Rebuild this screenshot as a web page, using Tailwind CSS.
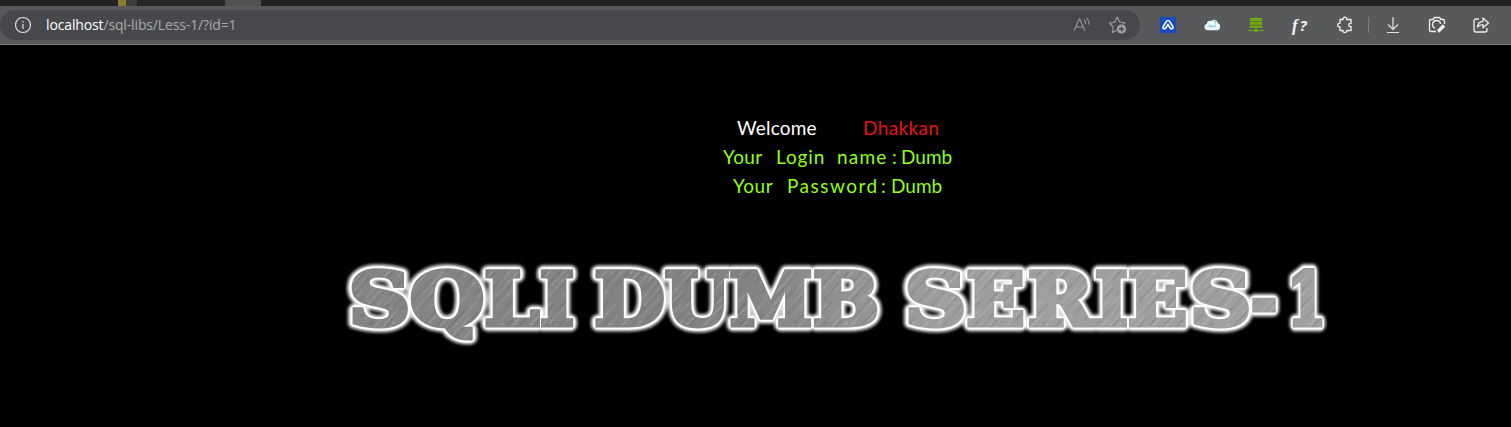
<!DOCTYPE html>
<html lang="en"><head><meta charset="utf-8"><title>Less-1</title>
<script src="https://cdn.jsdelivr.net/npm/@tailwindcss/browser@4"></script></head>
<body class="bg-black w-[1511px] h-[427px] overflow-hidden flex flex-col">
<div class="h-1.5 bg-[#202123] flex shrink-0"><div class="w-[118px]"></div><div class="w-2 bg-[#86802b]"></div><div class="w-[11px] bg-[#3c3d3f]"></div><div class="w-[88px] bg-[#242628]"></div><div class="w-9 bg-[#505153]"></div></div>
<header class="h-[39px] shrink-0 bg-[#58595b] border-b border-[#7b7d7c] flex items-center">
<div class="w-[1140px] h-[30px] bg-[#47484b] rounded-full flex items-center shrink-0 pl-[14px] pr-3">
<svg class="size-[18px] shrink-0" viewBox="0 0 18 18" fill="none" stroke="#e4e4e4" stroke-width="1.2"><circle cx="9" cy="9" r="7.5"/><path d="M9 8v5M9 5v1.4"/></svg>
<div class="ml-[14px] text-[14px] leading-5 font-['Open_Sans',sans-serif] tracking-[-0.14px] text-[#a9aaac] grow whitespace-nowrap"><span class="text-white">localhost</span>/sql-libs/Less-1/?id=1</div>
<svg class="w-[18px] h-5 mr-[16px]" viewBox="0 0 18 20" fill="none" stroke="#98999b" stroke-width="1.1"><path d="M0 16 5.200 4h.6L11 16M2 12h7M10 5c1.300 1.200 1.800 2.700 1.500 4.300M12.500 3c2 1.800 2.800 4.200 2.300 6.600"/></svg>
<svg class="size-5" viewBox="0 0 20 20" fill="none" stroke="#98999b" stroke-width="1.2" stroke-linejoin="round"><path d="M9 15.200 4.500 17.500l.8-5.500L1.500 8l5.300-.9L9.200 2l2.500 5 5.300.8-1.500 1.600"/><circle cx="13.500" cy="14" r="4.600" fill="#a1a2a4" stroke="none"/><path stroke="#47484b" stroke-width="1.300" d="M11 14h5M13.500 11.500v5"/></svg>
</div>
<div class="flex items-center pl-5">
<svg class="size-4 mr-7" viewBox="0 0 16 16"><path fill="#174bbf" d="M0 0h16v16H0z"/><path d="M8 7.500 5.800 11c-1 1.500-3.600.6-2.600-1.400L6 4.800c1-1.700 3-1.700 4 0l2.800 4.800c1 2-1.600 2.900-2.600 1.400Z" fill="none" stroke="#fff" stroke-width="1.600"/></svg>
<svg class="w-[17px] h-4 mr-[27px]" viewBox="0 0 18 16"><path fill="#e9f8fa" d="M4 13.500C-.5 13.500-.5 7.500 3 7c0-3 3-4 4.500-3 2.500-3 7-1.500 7 2 3.500.5 3.500 7.500-.5 7.500Z"/><path fill="none" stroke="#55b9c4" stroke-width=".8" d="M5 10.500 6.200 8l1.200 2.500m1-2v2m1.400-2v2m2-3v3M9.500 4l3-.5-.5 3"/></svg>
<svg class="size-4 mr-[28px]" viewBox="0 0 16 16" fill="#6fae0e"><path d="M2 1h12v3H2zM2 4.700h12v3H2zM2 8.400h12v2.300H2zM7.500 11h1v3h-1zM0 13h16v1H0zM6.500 12.300h3v2.700h-3z"/></svg>
<span class="w-[18px] text-[17px] leading-5 font-['Liberation_Serif',serif] font-bold text-[#f4f4f4] mr-[26px] whitespace-nowrap"><i>f</i><span class="font-['Open_Sans',sans-serif] text-[15px] ml-[2px] italic">?</span></span>
<svg class="size-[18px] mr-[14px]" viewBox="0 0 18 18" fill="none" stroke="#f1f1f1" stroke-width="1.300" stroke-linejoin="round"><path d="M4 3.500h3c-.5-3 4.300-3 3.800 0H15v4c-3-.8-3 3.800 0 3v4h-4.200c.5 2.800-4.300 2.800-3.800 0H4V11C1 11.500 1 6.700 4 7.200Z"/></svg>
<div class="w-px h-4 bg-[#7c7d7f] mr-[16px]"></div>
<svg class="size-4 mr-[27px]" viewBox="0 0 16 16" fill="none" stroke="#e6e6e6" stroke-width="1.200"><path d="M8 0v12M3 7.500l5 5 5-5M2 15.500h12"/></svg>
<svg class="size-[18px] mr-[26px]" viewBox="0 0 18 18" fill="none" stroke="#f0f0f0" stroke-width="1.300" stroke-linejoin="round"><path d="M8 15.500H3A1.500 1.500 0 0 1 1.500 14V5A1.500 1.500 0 0 1 3 3.500h2L6.500 1.500h5L13 3.500h2A1.500 1.500 0 0 1 16.500 5v3M7 12.200A4 4 0 1 1 12.500 8"/><path stroke-width="3.200" d="m10 15.500 6-6"/></svg>
<svg class="size-[18px]" viewBox="0 0 18 18" fill="none" stroke="#ededed" stroke-width="1.300" stroke-linejoin="round"><path d="M7 3H4a2 2 0 0 0-2 2v9a2 2 0 0 0 2 2h9a2 2 0 0 0 2-2v-2M5.500 11c.3-4 2.500-5.500 5.500-5.700V2l5.500 5-5.500 4.800V8.600c-2.300 0-4 .6-5.500 2.400Z"/></svg>
</div></header>
<main class="flex flex-col items-center pl-[165px] pt-[68px] font-['Lato',sans-serif] text-[19px] leading-[29px] text-[#8fff18]">
<p class="flex whitespace-pre"><span class="w-[126px] text-white tracking-[0.2px]">Welcome    </span><span class="w-[76px] tracking-[0.4px] text-[#e31212]">Dhakkan</span></p>
<p class="flex whitespace-pre"><span class="w-[53px] tracking-[0.4px]">Your </span><span class="w-[61px] tracking-[0.9px]">Login </span><span class="w-[55px] tracking-[1.2px]">name</span><span class="w-[9px]">:</span><span class="w-[52px]">Dumb</span></p>
<p class="flex whitespace-pre"><span class="w-[54px] tracking-[0.5px]">Your </span><span class="w-[94px] tracking-[1.500px]">Password</span><span class="w-[10px]">:</span><span class="w-[52px]">Dumb</span></p></main>
<svg class="w-[1511px] h-[120px] mt-[40px] shrink-0" viewBox="0 240 1511 120" font-family="DejaVu Serif" font-weight="bold" font-size="72">
<defs>
<linearGradient id="steel" gradientUnits="userSpaceOnUse" x1="345" y1="0" x2="1330" y2="0"><stop stop-color="#858585"/><stop offset=".4" stop-color="#828282"/><stop offset=".6" stop-color="#9e9e9e"/><stop offset="1" stop-color="#a0a0a0"/></linearGradient>
<filter id="glow" x="-5%" y="-30%" width="110%" height="160%"><feGaussianBlur stdDeviation="1.800"/></filter>
<pattern id="brush" width="97" height="45" patternUnits="userSpaceOnUse" patternTransform="rotate(-48)"><path stroke="#fff" stroke-opacity=".2" stroke-width=".7" d="M0 2h36M50 5h47M10 8h27M0 14h25M60 16h35M24 21h55M15 27h32M60 31h29M7 35h30M30 40h52"/><path stroke="#222" stroke-opacity=".2" stroke-width=".7" d="M25 3h50M0 10h42M54 13h30M0 19h28M53 24h35M2 30h45M42 37h45M0 42h36"/></pattern>
<text id="title" y="324.500"><tspan x="349" textLength="61" lengthAdjust="spacingAndGlyphs">S</tspan><tspan x="410" textLength="74" lengthAdjust="spacingAndGlyphs">Q</tspan><tspan x="484.500" textLength="55" lengthAdjust="spacingAndGlyphs">L</tspan><tspan x="540" textLength="34" lengthAdjust="spacingAndGlyphs">I</tspan> <tspan x="594.500" textLength="70" lengthAdjust="spacingAndGlyphs">D</tspan><tspan x="665" textLength="65" lengthAdjust="spacingAndGlyphs">U</tspan><tspan x="730" textLength="82" lengthAdjust="spacingAndGlyphs">M</tspan><tspan x="813" textLength="66" lengthAdjust="spacingAndGlyphs">B</tspan> <tspan x="905" textLength="61" lengthAdjust="spacingAndGlyphs">S</tspan><tspan x="966.500" textLength="58" lengthAdjust="spacingAndGlyphs">E</tspan><tspan x="1028" textLength="65" lengthAdjust="spacingAndGlyphs">R</tspan><tspan x="1095" textLength="33" lengthAdjust="spacingAndGlyphs">I</tspan><tspan x="1128" textLength="59" lengthAdjust="spacingAndGlyphs">E</tspan><tspan x="1190" textLength="61" lengthAdjust="spacingAndGlyphs">S</tspan><tspan x="1251" textLength="26" lengthAdjust="spacingAndGlyphs">-</tspan><tspan x="1287" textLength="39" lengthAdjust="spacingAndGlyphs">1</tspan></text>
</defs>
<g stroke-linejoin="round"><use href="#title" fill="#ddd" stroke="#ddd" stroke-width="13" filter="url(#glow)"/><use href="#title" fill="#fff" stroke="#fff" stroke-width="9"/><use href="#title" fill="url(#steel)" stroke="url(#steel)" stroke-width="5" stroke-linejoin="miter"/><use href="#title" fill="url(#brush)" stroke="url(#brush)" stroke-width="4.500"/></g>
<path stroke="#fff" d="M540.500 310v17M729.500 271v10M812.500 271v10M812.500 318v9M1025.500 271v10M1025.500 318v9M1094.500 271v10M1127.500 271v10M1127.500 318v9"/>
</svg>
</body></html>
